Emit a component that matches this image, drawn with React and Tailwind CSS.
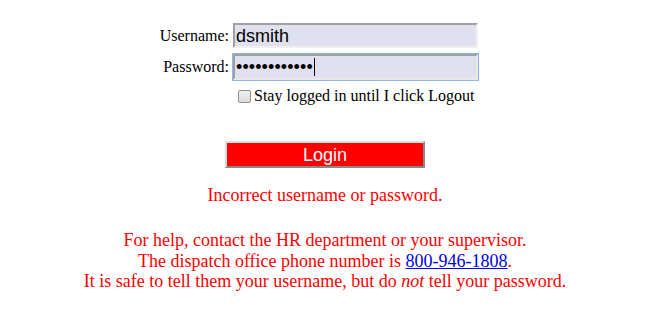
import React from "react";

const serif = "font-['Liberation_Serif','Times_New_Roman',serif]";
const sans = "font-['Liberation_Sans',Arial,sans-serif]";

function Field({ label, children }) {
  return (
    <div className="flex items-center h-[25px]">
      <label className={`w-[74px] text-right pr-[4px] text-[16px] text-black ${serif}`}>
        {label}
      </label>
      {children}
    </div>
  );
}

function App() {
  return (
    <div className="w-[650px] bg-white min-h-[319px] pt-[23px]">
      <div className="ml-[159px] flex flex-col gap-[6px]">
        <Field label="Username:">
          <div
            className={`w-[245px] h-[25px] bg-[#e0e0ee] border-2 border-t-[#a0a0a0] border-l-[#a0a0a0] border-r-[#f0f0f0] border-b-[#f0f0f0] flex items-center pl-[1px] text-[18px] leading-none text-black ${sans}`}
          >
            dsmith
          </div>
        </Field>
        <Field label="Password:">
          <div
            className={`w-[245px] h-[26px] bg-[#e0e0ee] border-2 border-t-[#a0a0a0] border-l-[#a0a0a0] border-r-[#e8e8e8] border-b-[#e8e8e8] outline outline-1 outline-[#8fb3f5] flex items-center pl-[1px] text-[18px] leading-none text-black ${sans}`}
          >
            <span className="tracking-[0.1px]">••••••••••••</span>
            <span className="w-px h-[18px] bg-black ml-[1px]" />
          </div>
        </Field>
        <div className="flex items-center ml-[79px] -mt-[1px]">
          <span className="w-[13px] h-[13px] rounded-[2px] border border-[#8f8f8f] bg-gradient-to-b from-[#f0f0f0] to-[#dcdcdc]" />
          <span className={`ml-[3px] text-[16px] text-black ${serif}`}>
            Stay logged in until I click Logout
          </span>
        </div>
      </div>

      <div className="flex justify-center mt-[33px]">
        <button
          className={`w-[200px] h-[27px] bg-[#ff0000] border-2 border-t-[#dcdcdc] border-l-[#dcdcdc] border-r-[#888] border-b-[#888] text-white font-normal text-[18px] leading-none ${sans}`}
        >
          Login
        </button>
      </div>

      <p className={`text-center text-[#ff0000] text-[18px] mt-[14px] ${serif}`}>
        Incorrect username or password.
      </p>

      <div className={`text-center text-[#ff0000] text-[18px] leading-[20.5px] mt-[21px] ${serif}`}>
        <p>For help, contact the HR department or your supervisor.</p>
        <p>
          The dispatch office phone number is{" "}
          <a href="#" className="text-[#0000ee] underline">
            800-946-1808
          </a>
          .
        </p>
        <p>
          It is safe to tell them your username, but do <i>not</i> tell your password.
        </p>
      </div>
    </div>
  );
}

export default App;
